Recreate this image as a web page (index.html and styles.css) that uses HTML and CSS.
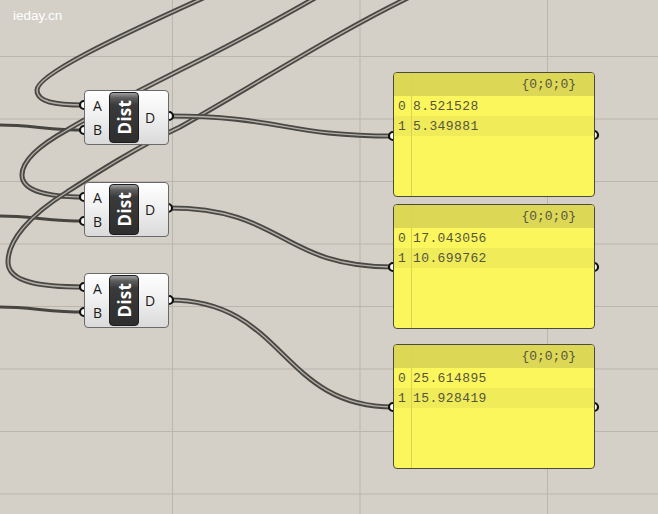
FILE: index.html
```html
<!DOCTYPE html>
<html>
<head>
<meta charset="utf-8">
<link rel="stylesheet" href="styles.css">
</head>
<body>
<div class="canvas">
  <svg class="wires" width="658" height="514" viewBox="0 0 658 514">
    <defs>
      <path id="a1" d="M84 105 C55 105 37 102 37 90 C37 75 110 40 212 -6"/>
      <path id="a2" d="M84 197 C45 197 22 190 22 175 C22 160 40 145 67 130 C100 110 150 85 200 60 C240 40 280 18 322 -6"/>
      <path id="a3" d="M84 287 C40 287 8 282 8 262 C8 240 30 215 67 192 C95 174 135 148 180 127 C260 82 340 30 420 -8"/>
      <path id="d1" d="M169 116 C280 116 285 136 393 136"/>
      <path id="d2" d="M169 208 C285 208 280 267 393 267"/>
      <path id="d3" d="M169 300 C285 300 280 407 393 407"/>
    </defs>
    <path class="single" d="M0 125 C30 125 50 130 84 130"/>
    <path class="single" d="M0 216 C30 216 50 221 84 221"/>
    <path class="single" d="M0 307 C30 307 50 312 84 312"/>
    <use class="outer" href="#a1"/><use class="inner" href="#a1"/>
    <use class="outer" href="#a2"/><use class="inner" href="#a2"/>
    <use class="outer" href="#a3"/><use class="inner" href="#a3"/>
    <use class="outer" href="#d1"/><use class="inner" href="#d1"/>
    <use class="outer" href="#d2"/><use class="inner" href="#d2"/>
    <use class="outer" href="#d3"/><use class="inner" href="#d3"/>
    <g class="grips">
      <circle cx="84" cy="105" r="4"/><circle cx="84" cy="130" r="4"/><circle cx="169" cy="116" r="4"/>
      <circle cx="84" cy="197" r="4"/><circle cx="84" cy="221" r="4"/><circle cx="168" cy="208" r="4"/>
      <circle cx="84" cy="287" r="4"/><circle cx="84" cy="312" r="4"/><circle cx="169" cy="300" r="4"/>
      <circle cx="393" cy="136" r="4"/><circle cx="594" cy="135" r="4"/>
      <circle cx="393" cy="267" r="4"/><circle cx="594" cy="267" r="4"/>
      <circle cx="393" cy="407" r="4"/><circle cx="594" cy="407" r="4"/>
    </g>
  </svg>

  <div class="watermark">ieday.cn</div>

  <div class="node n1">
    <div class="ports in"><span>A</span><span>B</span></div>
    <div class="icon"><span>Dist</span></div>
    <div class="ports out"><span>D</span></div>
  </div>
  <div class="node n2">
    <div class="ports in"><span>A</span><span>B</span></div>
    <div class="icon"><span>Dist</span></div>
    <div class="ports out"><span>D</span></div>
  </div>
  <div class="node n3">
    <div class="ports in"><span>A</span><span>B</span></div>
    <div class="icon"><span>Dist</span></div>
    <div class="ports out"><span>D</span></div>
  </div>

  <div class="panel p1">
    <div class="phead">{0;0;0}</div>
    <div class="prow"><span class="idx">0</span><span class="val">8.521528</span></div>
    <div class="prow alt"><span class="idx">1</span><span class="val">5.349881</span></div>
  </div>
  <div class="panel p2">
    <div class="phead">{0;0;0}</div>
    <div class="prow"><span class="idx">0</span><span class="val">17.043056</span></div>
    <div class="prow alt"><span class="idx">1</span><span class="val">10.699762</span></div>
  </div>
  <div class="panel p3">
    <div class="phead">{0;0;0}</div>
    <div class="prow"><span class="idx">0</span><span class="val">25.614895</span></div>
    <div class="prow alt"><span class="idx">1</span><span class="val">15.928419</span></div>
  </div>
</div>
</body>
</html>
```
FILE: styles.css
```css
html, body {
  margin: 0;
  padding: 0;
}
body {
  width: 658px;
  height: 514px;
  overflow: hidden;
  background-color: #d4d0c8;
}
.canvas {
  position: relative;
  width: 658px;
  height: 514px;
  background-color: #d4d0c8;
  background-image:
    linear-gradient(90deg, #bab6ae 1px, transparent 1px),
    linear-gradient(180deg, #bab6ae 1px, transparent 1px);
  background-size: 187.5px 100%, 100% 62.5px;
  background-position: 172px 0, 0 56px;
}
.wires {
  position: absolute;
  left: 0;
  top: 0;
}
.wires .single {
  fill: none;
  stroke: #47453f;
  stroke-width: 3;
}
.wires .outer {
  fill: none;
  stroke: #4a4844;
  stroke-width: 5;
}
.wires .inner {
  fill: none;
  stroke: #b4b0a8;
  stroke-width: 1.4;
}
.grips circle {
  fill: #ffffff;
  stroke: #111;
  stroke-width: 2.2;
}
.watermark {
  position: absolute;
  left: 13px;
  top: 8px;
  font-family: "Liberation Sans", Arial, sans-serif;
  font-size: 13.5px;
  color: #ffffff;
}

/* component nodes */
.node {
  position: absolute;
  left: 84px;
  width: 85px;
  height: 55px;
  box-sizing: border-box;
  border: 1px solid #6a6a6a;
  border-radius: 4px;
  background: linear-gradient(180deg, #ffffff 0%, #f1f1f1 45%, #dadada 100%);
  padding: 1px;
  display: flex;
  font-family: "Open Sans", "DejaVu Sans", sans-serif;
  color: #1a1a1a;
}
.n1 { top: 90px; }
.n2 { top: 182px; }
.n3 { top: 273px; }
.ports {
  display: flex;
  flex-direction: column;
}
.ports.in {
  width: 23px;
  padding-top: 2px;
}
.ports.in span {
  height: 24px;
  line-height: 24px;
  text-align: center;
  font-size: 14px;
}
.ports.out {
  flex: 1;
  justify-content: center;
  padding-left: 6px;
  font-size: 14px;
}
.icon {
  width: 30px;
  box-sizing: border-box;
  border: 1px solid #1c1c1c;
  border-radius: 4px;
  background: linear-gradient(180deg, #a0a0a0 0px, #5c5c5c 5px, #3a3a3a 12px, #2e2e2e 100%);
  display: flex;
  align-items: center;
  justify-content: center;
}
.icon span {
  writing-mode: vertical-rl;
  transform: rotate(180deg);
  color: #ffffff;
  font-family: "Open Sans", "DejaVu Sans", sans-serif;
  font-weight: 700;
  font-size: 17px;
  line-height: 1;
  letter-spacing: 0.2px;
}

/* panels */
.panel {
  position: absolute;
  left: 393px;
  width: 202px;
  height: 125px;
  box-sizing: border-box;
  border: 1px solid #4c4a3a;
  border-radius: 4px;
  background: #fbf65c;
  overflow: hidden;
  font-family: "Liberation Mono", "Courier New", monospace;
  color: #56553e;
}
.panel::after {
  content: "";
  position: absolute;
  left: 17px;
  top: 0;
  bottom: 0;
  width: 1px;
  background: #d9d44e;
}
.p1 { top: 72px; }
.p2 { top: 204px; }
.p3 { top: 344px; }
.phead {
  height: 23px;
  line-height: 23px;
  background: #dcd856;
  text-align: right;
  padding-right: 18px;
  font-size: 13px;
}
.prow {
  height: 20px;
  line-height: 21px;
  display: flex;
  font-size: 13px;
}
.prow.alt {
  background: #efeb59;
}
.idx {
  width: 19px;
  padding-left: 4px;
  box-sizing: border-box;
}
.val {
  letter-spacing: 0.4px;
}
```
